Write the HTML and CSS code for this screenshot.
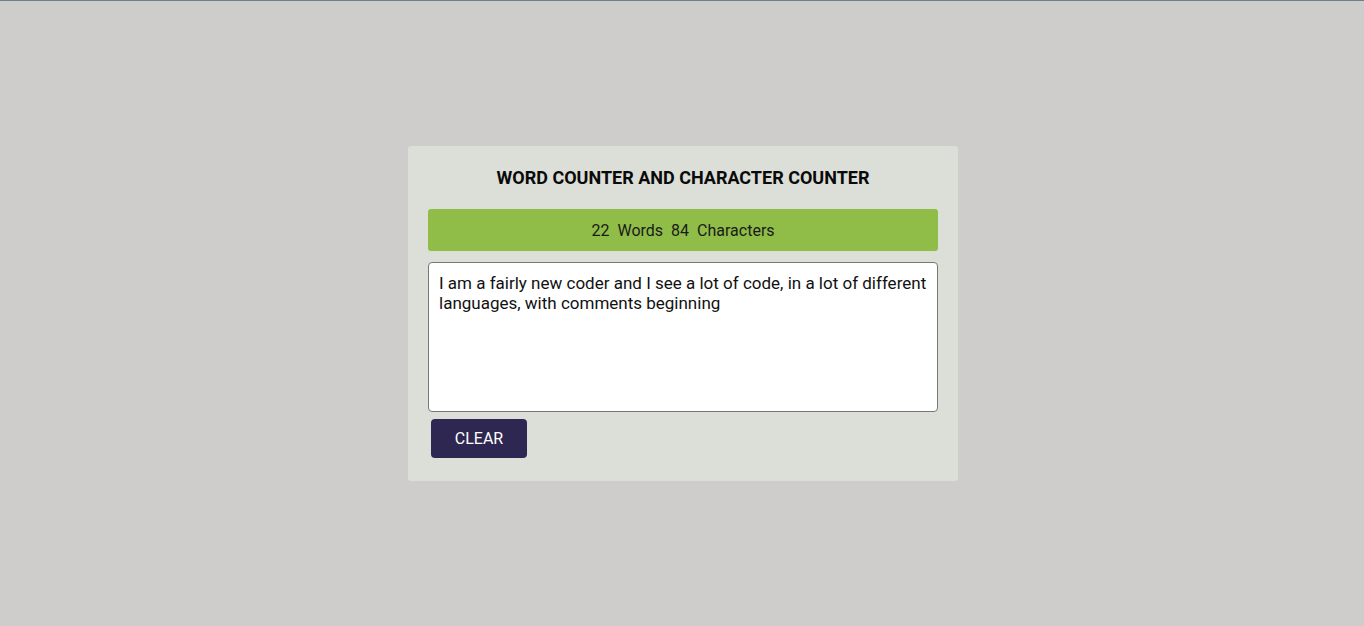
FILE: index.html
```html
<!DOCTYPE html>
<html lang="en">
<head>
<meta charset="utf-8">
<title>Word Counter</title>
<link rel="stylesheet" href="styles.css">
</head>
<body>
<main class="page">
  <section class="card">
    <h1 class="title">WORD COUNTER AND CHARACTER COUNTER</h1>
    <div class="stats">
      <span class="num">22</span><span class="label">Words</span><span class="num">84</span><span class="label">Characters</span>
    </div>
    <textarea class="input" spellcheck="false">I am a fairly new coder and I see a lot of code, in a lot of different languages, with comments beginning</textarea>
    <div class="actions">
      <button class="clear" type="button">CLEAR</button>
    </div>
  </section>
</main>
</body>
</html>
```
FILE: styles.css
```css
html, body {
  margin: 0;
  padding: 0;
  height: 100%;
}
body {
  background: #cecdcb;
  border-top: 1px solid #6e7f8c;
  box-sizing: border-box;
  font-family: Roboto, "Liberation Sans", sans-serif;
}
.page {
  display: flex;
  justify-content: center;
  padding-top: 145px;
  padding-left: 2px;
}
.card {
  width: 510px;
  background: #dcdfd8;
  border-radius: 3px;
  padding: 20px 20px 23px;
  display: flex;
  flex-direction: column;
}
.title {
  margin: 2px 0 21px;
  font-size: 18px;
  line-height: 20px;
  font-weight: 700;
  text-align: center;
  color: #0a0a0a;
}
.stats {
  height: 42px;
  background: #8fbd48;
  border-radius: 3px;
  display: flex;
  align-items: center;
  justify-content: center;
  font-size: 16px;
  color: #1a1a1a;
}
.num { margin: 0 4px; }
.label { margin: 0 4px; }
.input {
  margin-top: 11px;
  height: 150px;
  box-sizing: border-box;
  padding: 10px 10px;
  border: 1px solid #777;
  border-radius: 4px;
  background: #fff;
  font-family: Roboto, "Liberation Sans", sans-serif;
  font-size: 17px;
  line-height: 20px;
  color: #111;
  resize: none;
  outline: none;
}
.actions {
  display: flex;
  margin-top: 7px;
  padding-left: 3px;
}
.clear {
  width: 96px;
  height: 39px;
  border: none;
  border-radius: 4px;
  background: #2e2752;
  color: #fff;
  font-family: Roboto, "Liberation Sans", sans-serif;
  font-size: 16px;
  cursor: pointer;
}
```
